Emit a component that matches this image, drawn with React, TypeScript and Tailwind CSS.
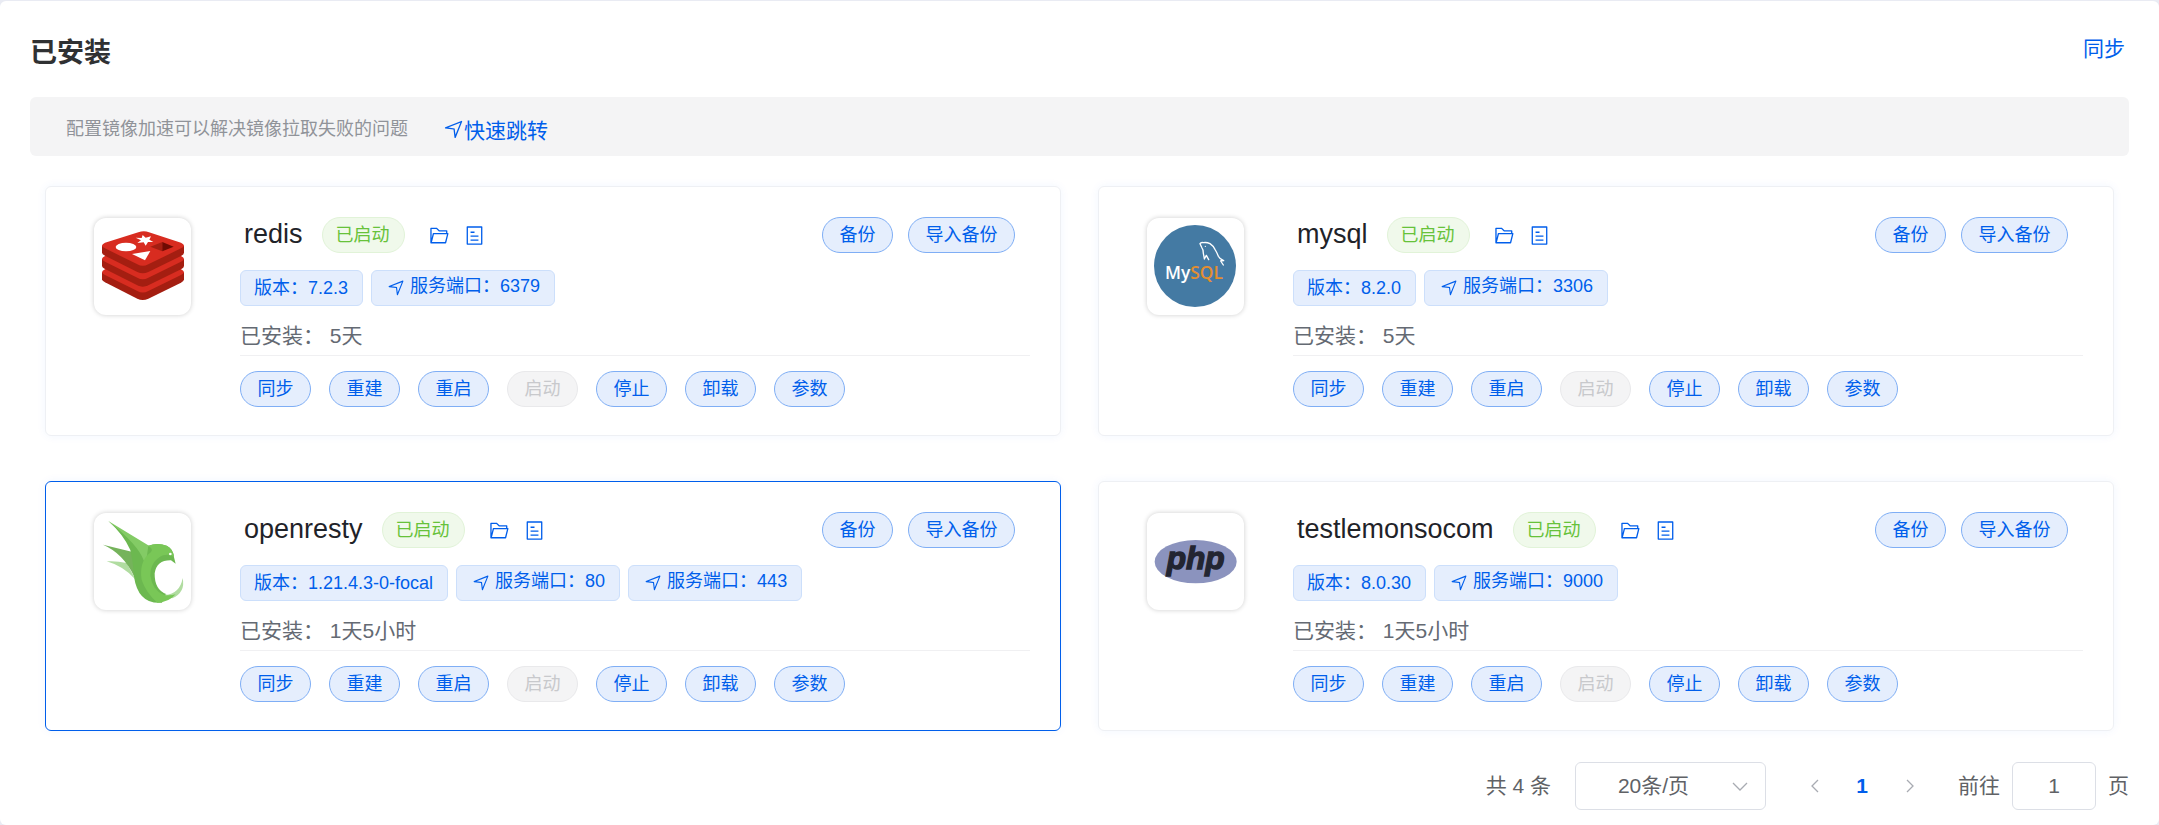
import React from 'react'

type App = {
  name: string
  version: string
  ports: number[]
  installed: string
  active?: boolean
  logo: React.ReactNode
}

const RedisLogo = () => (
  <svg viewBox="27 24 291 291" className="size-full" aria-hidden="true">
    {[80, 40, 0].map((dy) => (
      <g key={dy} transform={`translate(0 ${dy})`}>
        <path fill="#a41e11" d="M51 107V128Q51 132 60 137L157 186Q173 194 190 186L288 138Q297 133 297 128V107Z" />
        <path fill="#d82c20" d="M51 107Q51 102 60 98L160 67Q177 60 192 67L288 98Q297 102 297 107Q297 111 288 115L190 163Q173 172 157 163L60 115Q51 111 51 107Z" />
      </g>
    ))}
    <path fill="#fff" d="M173 75L182 83L198 79L193 89L205 96L189 96L182 107L176 97L157 99L168 91L152 83L170 84Z" />
    <ellipse fill="#fff" cx="123" cy="111" rx="31" ry="13" />
    <path fill="#fff" d="M141 132L196 123L180 151Z" />
    <path fill="#a41e11" d="M196 110L232 96V124Z" />
    <path fill="#6f0b03" d="M232 96L266 110L232 124Z" />
  </svg>
)

const MysqlLogo = () => (
  <svg viewBox="24 24 291 291" className="size-full" role="img" aria-label="MySQL">
    <circle cx="168" cy="168" r="123" fill="#447aa3" />
    <text x="78" y="207" fontSize="52" fontWeight="600" fontFamily="'Open Sans', sans-serif" fill="#fff">
      My<tspan fill="#e48e2f">SQL</tspan>
    </text>
    <path fill="none" stroke="#fff" strokeWidth="4" strokeLinejoin="round" strokeLinecap="round"
      d="M196 147Q195 139 193 130Q193 118 188 112L183 101Q186 96 193 98Q203 96 213 101Q225 109 229 120Q235 130 238 139Q241 146 254 152L245 153L253 165M196 147L202 136L209 149M254 152L247 151" />
    <circle cx="199" cy="109" r="2" fill="#fff" />
  </svg>
)

const OpenrestyLogo = () => (
  <svg viewBox="27 24 291 291" className="size-full" aria-hidden="true">
    <path fill="#b0dca0" d="M65 169Q95 167 125 174L152 224Q115 183 65 169Z" />
    <path fill="#75b35b" d="M54 119L140 140L165 205L148 215Q115 145 54 119Z" />
    <path fill="#83cb65" d="M70 48L192 122L215 150L178 185L130 115Q105 78 70 48Z" />
    <path fill="#6cb850" d="M70 48Q160 120 176 166L190 200L232 293Q160 300 147 215Q144 170 136 135Q115 88 70 48Z" />
    <path fill="#b0dca0" d="M293 219Q302 262 262 280L240 270Q285 266 293 219Z" />
    <path fill="#6cb850" d="M190 122Q218 112 245 122Q266 132 267 157L272 176L258 166Q215 165 209 205Q208 255 245 268L225 275L180 195Z" />
    <path fill="#79c757" d="M188 123Q218 112 245 122Q263 130 267 156Q254 145 234 151Q196 168 196 212Q202 255 236 269Q254 273 272 268Q250 293 217 293Q184 265 170 225Q162 175 190 148Q212 133 188 123Z" />
    <circle cx="256" cy="147" r="4" fill="#fff" />
  </svg>
)

const PhpLogo = () => (
  <svg viewBox="24 24 291 291" className="size-full" role="img" aria-label="php">
    <ellipse cx="170" cy="170" rx="123" ry="65" fill="#8b93be" />
    <text x="83" y="192" fontSize="95" fontWeight="700" fontStyle="italic" fontFamily="'Liberation Sans', Arial, sans-serif" fill="#232531" stroke="#232531" strokeWidth="4">
      php
    </text>
  </svg>
)

const PositionIcon = ({ className }: { className: string }) => (
  <svg viewBox="0 0 1024 1024" fill="currentColor" className={className} aria-hidden="true">
    <path d="m249.6 417.088 319.744 43.072 39.168 310.272L845.12 178.88zm-129.024 47.168a32 32 0 0 1-7.68-61.44l777.792-311.04a32 32 0 0 1 41.6 41.6l-310.336 775.68a32 32 0 0 1-61.44-7.808L512 516.992z" />
  </svg>
)

const FolderIcon = () => (
  <svg viewBox="0 0 1024 1024" fill="currentColor" className="size-[21px]" aria-hidden="true">
    <path d="M878.08 448H241.92l-96 384h636.16zM832 384v-64H485.76L357.504 192H128v448l57.92-231.744A32 32 0 0 1 216.96 384zm-24.96 512H96a32 32 0 0 1-32-32V160a32 32 0 0 1 32-32h287.872l128.384 128H864a32 32 0 0 1 32 32v96h23.04a32 32 0 0 1 31.04 39.744l-112 448A32 32 0 0 1 807.04 896" />
  </svg>
)

const TicketsIcon = () => (
  <svg viewBox="0 0 1024 1024" fill="currentColor" className="size-[21px]" aria-hidden="true">
    <path d="M192 128v768h640V128zm-32-64h704a32 32 0 0 1 32 32v832a32 32 0 0 1-32 32H160a32 32 0 0 1-32-32V96a32 32 0 0 1 32-32m160 448h384v64H320zm0-192h192v64H320zm0 384h384v64H320z" />
  </svg>
)

const apps: App[] = [
  { name: 'redis', version: '7.2.3', ports: [6379], installed: '5天', logo: <RedisLogo /> },
  { name: 'mysql', version: '8.2.0', ports: [3306], installed: '5天', logo: <MysqlLogo /> },
  { name: 'openresty', version: '1.21.4.3-0-focal', ports: [80, 443], installed: '1天5小时', active: true, logo: <OpenrestyLogo /> },
  { name: 'testlemonsocom', version: '8.0.30', ports: [9000], installed: '1天5小时', logo: <PhpLogo /> },
]

const actions = ['同步', '重建', '重启', '启动', '停止', '卸载', '参数']

const RoundButton: React.FC<{ wide?: boolean; disabled?: boolean; children: React.ReactNode }> = ({ wide, disabled, children }) => (
  <button
    type="button"
    disabled={disabled}
    className={`flex h-9 shrink-0 items-center justify-center rounded-full border text-lg leading-none ${wide ? 'w-[107px]' : 'w-[71px]'} ${
      disabled ? 'border-[#e9e9eb] bg-[#f4f4f5] text-[#c8c9cc]' : 'border-[#7faef5] bg-[#e5eefd] text-[#005eeb]'
    }`}
  >
    {children}
  </button>
)

const AppCard: React.FC<{ app: App }> = ({ app }) => (
  <article
    className={`flex rounded-md border pt-[30px] pr-[30px] pb-7 pl-12 shadow-[0_0_10px_rgba(0,94,235,0.06)] ${
      app.active ? 'border-[#005eeb]' : 'border-[#eef0f4]'
    }`}
  >
    <div className="mt-px size-[97px] shrink-0 rounded-xl shadow-[0_0_5px_rgba(0,0,0,0.2)]">{app.logo}</div>
    <div className="ml-[49px] min-w-0 flex-1">
      <div className="flex items-center pr-[15px]">
        <h2 className="pb-px pl-1 text-[27px] leading-[35px] text-[#1f2329]">{app.name}</h2>
        <span className="ml-[19px] flex h-9 items-center rounded-full border border-[#e1f3d8] bg-[#f0f9eb] pr-[14px] pl-[13px] text-lg leading-none text-[#67c23a]">
          已启动
        </span>
        <button type="button" aria-label="打开目录" className="ml-6 text-[#005eeb]">
          <FolderIcon />
        </button>
        <button type="button" aria-label="日志" className="ml-[14px] text-[#005eeb]">
          <TicketsIcon />
        </button>
        <div className="ml-auto flex gap-[15px]">
          <RoundButton>备份</RoundButton>
          <RoundButton wide>导入备份</RoundButton>
        </div>
      </div>
      <div className="mt-[17px] flex gap-2 text-lg leading-none text-[#005eeb]">
        <span className="flex h-9 items-center rounded-md border border-[#ccdffb] bg-[#e5eefd] pr-[14px] pl-[13px]">版本：{app.version}</span>
        {app.ports.map((port) => (
          <button key={port} type="button" className="flex h-9 items-center rounded-md border border-[#ccdffb] bg-[#e5eefd] pr-[14px] pl-[15px]">
            <PositionIcon className="size-[18px]" />
            <span className="ml-[5px] pb-1">服务端口：{port}</span>
          </button>
        ))}
      </div>
      <p className="mt-[13px] border-b border-[#f0f0f2] pb-[2px] text-[21px] leading-[34px] text-[#646a73]">已安装： {app.installed}</p>
      <div className="mt-[15px] flex gap-[18px]">
        {actions.map((action) => (
          <RoundButton key={action} disabled={action === '启动'}>
            {action}
          </RoundButton>
        ))}
      </div>
    </div>
  </article>
)

export default function App() {
  return (
    <div className="flex min-h-screen flex-col bg-[#e9ebf3] pt-px font-['Liberation_Sans','Noto_Sans_CJK_SC',sans-serif]">
      <main className="flex-1 rounded-md bg-white px-[30px] pt-8 pb-[14px]">
        <header className="flex items-start justify-between">
          <h1 className="text-[27px] leading-10 font-bold text-[#303133]">已安装</h1>
          <button type="button" className="mr-1 text-[21px] leading-8 text-[#005eeb]">同步</button>
        </header>

        <div className="mt-6 flex h-[59px] items-center rounded-md bg-[#f4f4f5] pt-[5px] pl-9 text-lg text-[#909399]">
          <span>配置镜像加速可以解决镜像拉取失败的问题</span>
          <a href="#" className="ml-[35px] flex items-center pt-1 text-[21px] leading-8 text-[#005eeb]">
            <PositionIcon className="mb-1 size-[21px]" />
            快速跳转
          </a>
        </div>

        <section className="mx-[15px] mt-[30px] grid grid-cols-2 gap-x-[37px] gap-y-[45px]">
          {apps.map((app) => (
            <AppCard key={app.name} app={app} />
          ))}
        </section>

        {/* Pagination */}
        <nav className="mt-[31px] flex h-12 items-center justify-end text-[21px] text-[#606266]">
          <span>共 4 条</span>
          <div className="relative ml-6">
            <select aria-label="每页条数" className="h-12 w-[191px] appearance-none rounded-md border border-[#dcdfe6] bg-white pr-[34px] [text-align-last:center]">
              <option>20条/页</option>
            </select>
            <svg viewBox="0 0 16 9" className="pointer-events-none absolute top-5 right-[18px] h-[9px] w-4" fill="none" stroke="#a8abb2" strokeWidth="1.3" aria-hidden="true">
              <path d="M1 1l7 7 7-7" />
            </svg>
          </div>
          <button type="button" aria-label="上一页" disabled className="ml-6 flex h-12 w-12 items-center justify-center">
            <svg viewBox="0 0 9 14" className="h-[14px] w-[9px]" fill="none" stroke="#a8abb2" strokeWidth="1.3" aria-hidden="true">
              <path d="M8 1L2 7l6 6" />
            </svg>
          </button>
          <button type="button" aria-current="page" className="h-12 w-12 font-bold text-[#005eeb]">1</button>
          <button type="button" aria-label="下一页" disabled className="flex h-12 w-12 items-center justify-center">
            <svg viewBox="0 0 9 14" className="h-[14px] w-[9px]" fill="none" stroke="#a8abb2" strokeWidth="1.3" aria-hidden="true">
              <path d="M1 1l6 6-6 6" />
            </svg>
          </button>
          <label className="ml-6 flex items-center gap-3">
            前往
            <input defaultValue="1" className="h-12 w-[84px] rounded-md border border-[#dcdfe6] text-center" />
            页
          </label>
        </nav>
      </main>
    </div>
  )
}
